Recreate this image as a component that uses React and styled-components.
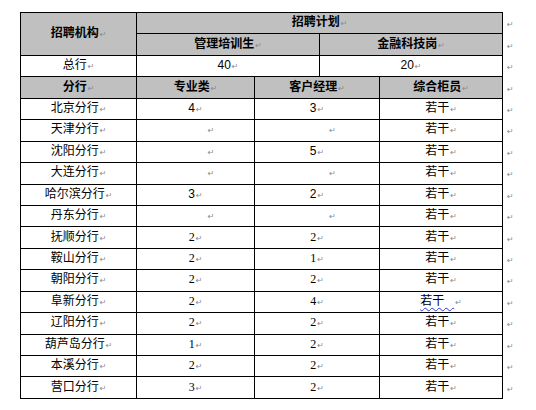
import React from 'react';
import styled, { createGlobalStyle } from 'styled-components';

const Global = createGlobalStyle`
  html, body { margin: 0; background: #fff; }
  body {
    padding: 12px 0 0 20px;
    font-family: "Liberation Sans", "Noto Sans CJK SC", sans-serif;
    color: #000;
  }
`;

const Table = styled.table`
  border-collapse: collapse;
  table-layout: fixed;
  width: 502px;
  font-size: 12px;
`;

const Row = styled.tr`
  height: 21.44px;
`;

const Cell = styled.td`
  border: 1px solid #000;
  padding: 0;
  text-align: center;
  vertical-align: middle;
  line-height: 14px;
  white-space: nowrap;
  font-size: 12px;
  background: ${p => (p.$head ? '#c0c0c0' : '#fff')};
  font-weight: ${p => (p.$head ? 'bold' : 'normal')};
  font-family: ${p => (p.$serif
    ? '"Liberation Serif", "Noto Sans CJK SC", serif'
    : '"Liberation Sans", "Noto Sans CJK SC", sans-serif')};
  padding-left: ${p => (p.$empty ? '30px' : '0')};
`;

const Edge = styled.td`
  border: none;
  padding: 0 0 0 3px;
  text-align: left;
  vertical-align: middle;
`;

const Mark = styled.span`
  color: #8a8a8a;
  font-family: "DejaVu Sans", sans-serif;
  font-size: 8px;
  font-weight: normal;
  margin-left: 1px;
`;

const Wavy = styled.span`
  text-decoration: underline wavy #2b3bd6;
  text-decoration-thickness: 1px;
  text-underline-offset: 2px;
`;

const R = () => <Mark>↵</Mark>;

const rows = [
  ['北京分行', '4', '3'],
  ['天津分行', '', ''],
  ['沈阳分行', '', '5'],
  ['大连分行', '', ''],
  ['哈尔滨分行', '3', '2'],
  ['丹东分行', '', ''],
  ['抚顺分行', '2', '2', true],
  ['鞍山分行', '2', '1', true],
  ['朝阳分行', '2', '2', true],
  ['阜新分行', '2', '4', true, true],
  ['辽阳分行', '2', '2', true],
  ['葫芦岛分行', '1', '2', true],
  ['本溪分行', '2', '2', true],
  ['营口分行', '3', '2', true],
];

export default function App() {
  return (
    <>
      <Global />
      <Table>
        <colgroup>
          <col style={{ width: 116 }} />
          <col style={{ width: 118 }} />
          <col style={{ width: 65 }} />
          <col style={{ width: 60 }} />
          <col style={{ width: 123 }} />
          <col style={{ width: 20 }} />
        </colgroup>
        <tbody>
          <Row>
            <Cell $head rowSpan={2}>招聘机构<R /></Cell>
            <Cell $head colSpan={4}>招聘计划<R /></Cell>
            <Edge><R /></Edge>
          </Row>
          <Row>
            <Cell $head colSpan={2}>管理培训生<R /></Cell>
            <Cell $head colSpan={2}>金融科技岗<R /></Cell>
            <Edge><R /></Edge>
          </Row>
          <Row>
            <Cell>总行<R /></Cell>
            <Cell colSpan={2}>40<R /></Cell>
            <Cell colSpan={2}>20<R /></Cell>
            <Edge><R /></Edge>
          </Row>
          <Row>
            <Cell $head>分行<R /></Cell>
            <Cell $head>专业类<R /></Cell>
            <Cell $head colSpan={2}>客户经理<R /></Cell>
            <Cell $head>综合柜员<R /></Cell>
            <Edge><R /></Edge>
          </Row>
          {rows.map(([name, a, b, serif, wavy]) => (
            <Row key={name}>
              <Cell>{name}<R /></Cell>
              <Cell $serif={serif} $empty={!a}>{a}<R /></Cell>
              <Cell $serif={serif} $empty={!b} colSpan={2}>{b}<R /></Cell>
              <Cell>
                {wavy ? <><Wavy>若干&nbsp;&nbsp;&nbsp;</Wavy><R /></> : <>若干<R /></>}
              </Cell>
              <Edge><R /></Edge>
            </Row>
          ))}
        </tbody>
      </Table>
    </>
  );
}
